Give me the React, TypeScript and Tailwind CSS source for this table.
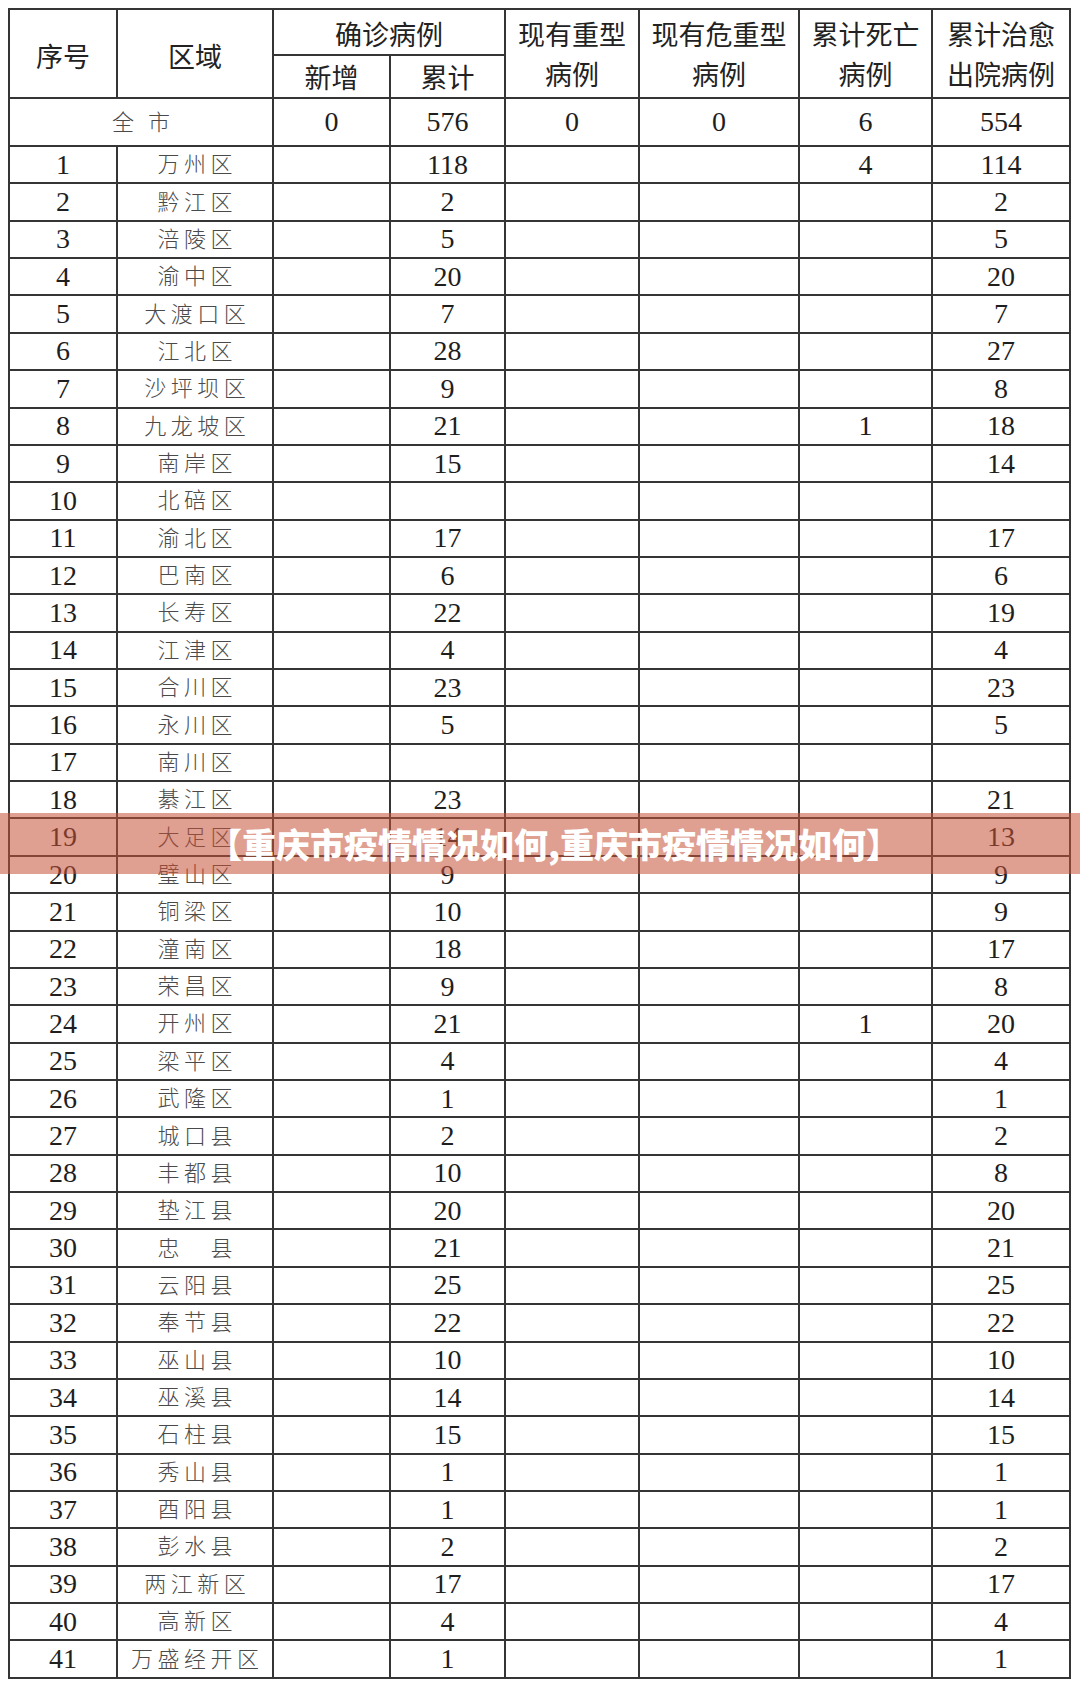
import React from "react";

type Row = [string, string, string, string, string, string, string, string];

const rows: Row[] = [
  ["1", "万州区", "", "118", "", "", "4", "114"],
  ["2", "黔江区", "", "2", "", "", "", "2"],
  ["3", "涪陵区", "", "5", "", "", "", "5"],
  ["4", "渝中区", "", "20", "", "", "", "20"],
  ["5", "大渡口区", "", "7", "", "", "", "7"],
  ["6", "江北区", "", "28", "", "", "", "27"],
  ["7", "沙坪坝区", "", "9", "", "", "", "8"],
  ["8", "九龙坡区", "", "21", "", "", "1", "18"],
  ["9", "南岸区", "", "15", "", "", "", "14"],
  ["10", "北碚区", "", "", "", "", "", ""],
  ["11", "渝北区", "", "17", "", "", "", "17"],
  ["12", "巴南区", "", "6", "", "", "", "6"],
  ["13", "长寿区", "", "22", "", "", "", "19"],
  ["14", "江津区", "", "4", "", "", "", "4"],
  ["15", "合川区", "", "23", "", "", "", "23"],
  ["16", "永川区", "", "5", "", "", "", "5"],
  ["17", "南川区", "", "", "", "", "", ""],
  ["18", "綦江区", "", "23", "", "", "", "21"],
  ["19", "大足区", "", "14", "", "", "", "13"],
  ["20", "璧山区", "", "9", "", "", "", "9"],
  ["21", "铜梁区", "", "10", "", "", "", "9"],
  ["22", "潼南区", "", "18", "", "", "", "17"],
  ["23", "荣昌区", "", "9", "", "", "", "8"],
  ["24", "开州区", "", "21", "", "", "1", "20"],
  ["25", "梁平区", "", "4", "", "", "", "4"],
  ["26", "武隆区", "", "1", "", "", "", "1"],
  ["27", "城口县", "", "2", "", "", "", "2"],
  ["28", "丰都县", "", "10", "", "", "", "8"],
  ["29", "垫江县", "", "20", "", "", "", "20"],
  ["30", "忠\u3000县", "", "21", "", "", "", "21"],
  ["31", "云阳县", "", "25", "", "", "", "25"],
  ["32", "奉节县", "", "22", "", "", "", "22"],
  ["33", "巫山县", "", "10", "", "", "", "10"],
  ["34", "巫溪县", "", "14", "", "", "", "14"],
  ["35", "石柱县", "", "15", "", "", "", "15"],
  ["36", "秀山县", "", "1", "", "", "", "1"],
  ["37", "酉阳县", "", "1", "", "", "", "1"],
  ["38", "彭水县", "", "2", "", "", "", "2"],
  ["39", "两江新区", "", "17", "", "", "", "17"],
  ["40", "高新区", "", "4", "", "", "", "4"],
  ["41", "万盛经开区", "", "1", "", "", "", "1"],
];

const sans = "font-['Noto_Sans_CJK_SC','Noto_Sans',sans-serif]";
const cell = "border-2 border-[#353535] p-0 text-center align-middle";
const num = "font-['Liberation_Serif','Noto_Sans_CJK_SC',serif] text-[28px] leading-none text-[#1e1e1e]";
const name =
  "font-['Noto_Sans_CJK_SC',sans-serif] font-light text-[22px] leading-none tracking-[4.5px] text-[#4a4a4a]";
const head = `${sans} text-[27px] leading-[40px] text-[#222222]`;

export default function App() {
  return (
    <div className="relative w-[1080px] h-[1688px] bg-white overflow-hidden">
      <div className="pt-[8px] pl-[8px]">
        <table className="border-collapse table-fixed w-[1061px]">
          <colgroup>
            <col className="w-[108px]" />
            <col className="w-[156px]" />
            <col className="w-[117px]" />
            <col className="w-[115px]" />
            <col className="w-[134px]" />
            <col className="w-[160px]" />
            <col className="w-[133px]" />
            <col className="w-[138px]" />
          </colgroup>
          <thead>
            <tr className="h-[46px]">
              <th rowSpan={2} className={`${cell} ${head} font-normal pt-[4px]`}>
                序号
              </th>
              <th rowSpan={2} className={`${cell} ${head} font-normal pt-[4px]`}>
                区域
              </th>
              <th colSpan={2} className={`${cell} ${head} font-normal pt-[3px]`}>
                确诊病例
              </th>
              <th rowSpan={2} className={`${cell} ${head} font-normal`}>
                现有重型
                <br />
                病例
              </th>
              <th rowSpan={2} className={`${cell} ${head} font-normal`}>
                现有危重型
                <br />
                病例
              </th>
              <th rowSpan={2} className={`${cell} ${head} font-normal`}>
                累计死亡
                <br />
                病例
              </th>
              <th rowSpan={2} className={`${cell} ${head} font-normal`}>
                累计治愈
                <br />
                出院病例
              </th>
            </tr>
            <tr className="h-[43px]">
              <th className={`${cell} ${head} font-normal`}>新增</th>
              <th className={`${cell} ${head} font-normal`}>累计</th>
            </tr>
          </thead>
          <tbody>
            <tr className="h-[48px]">
              <td colSpan={2} className={cell}>
                <span className="font-['Noto_Sans_CJK_SC',sans-serif] font-light text-[22px] leading-none tracking-[14px] text-[#4a4a4a] pl-[14px]">
                  全市
                </span>
              </td>
              <td className={`${cell} ${num}`}>0</td>
              <td className={`${cell} ${num}`}>576</td>
              <td className={`${cell} ${num}`}>0</td>
              <td className={`${cell} ${num}`}>0</td>
              <td className={`${cell} ${num}`}>6</td>
              <td className={`${cell} ${num}`}>554</td>
            </tr>
            {rows.map((r) => (
              <tr key={r[0]} className="h-[37.37px]">
                <td className={`${cell} ${num}`}>{r[0]}</td>
                <td className={cell}>
                  <span className={`${name} pl-[4.5px]`}>{r[1]}</span>
                </td>
                <td className={`${cell} ${num}`}>{r[2]}</td>
                <td className={`${cell} ${num}`}>{r[3]}</td>
                <td className={`${cell} ${num}`}>{r[4]}</td>
                <td className={`${cell} ${num}`}>{r[5]}</td>
                <td className={`${cell} ${num}`}>{r[6]}</td>
                <td className={`${cell} ${num}`}>{r[7]}</td>
              </tr>
            ))}
          </tbody>
        </table>
      </div>

      <div className="absolute left-0 right-0 top-[813px] h-[61px] bg-[rgba(196,80,55,0.55)] flex items-center justify-center pl-[28px]">
        <span className="font-['Noto_Sans_CJK_SC',sans-serif] font-black text-[34px] leading-none text-white">
          【重庆市疫情情况如何,重庆市疫情情况如何】
        </span>
      </div>
    </div>
  );
}
